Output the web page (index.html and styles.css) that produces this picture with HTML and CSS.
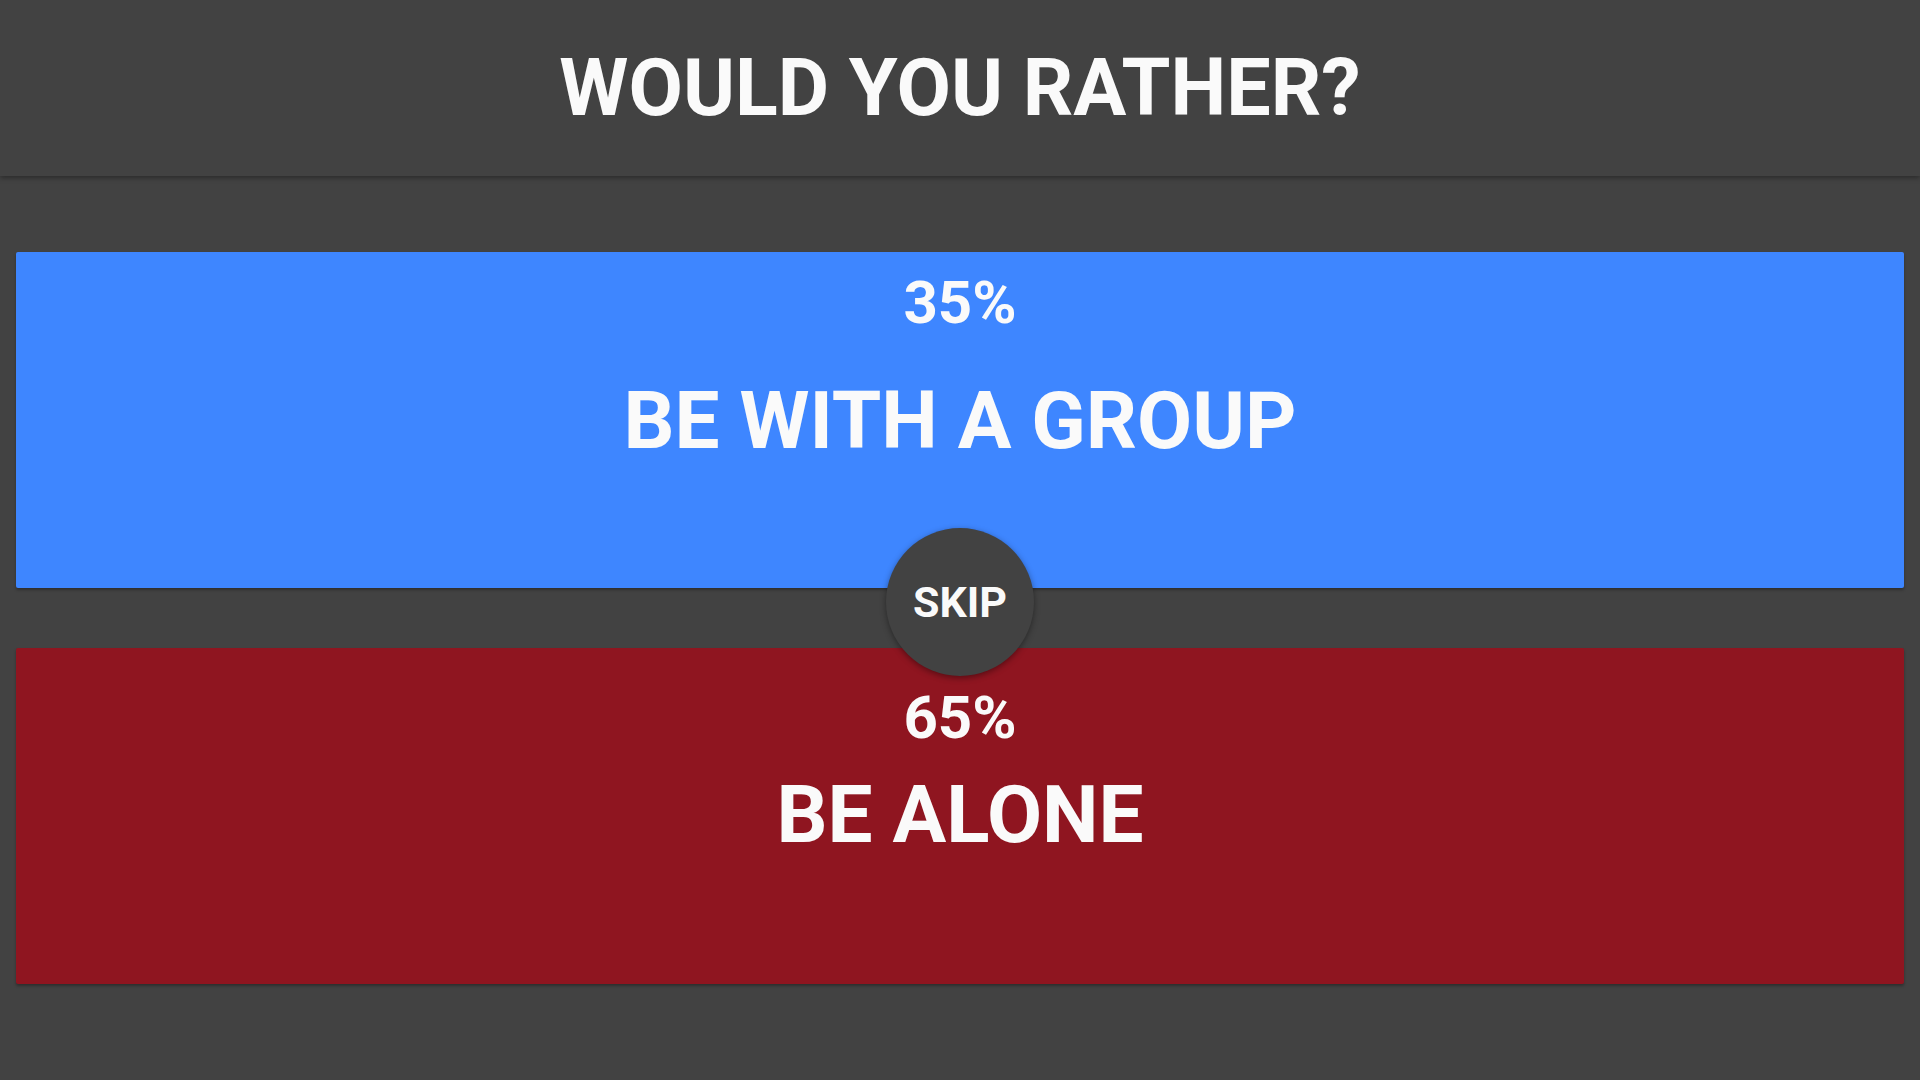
FILE: index.html
```html
<!DOCTYPE html>
<html lang="en">
  <head>
    <meta charset="UTF-8" />
    <meta name="viewport" content="width=device-width, initial-scale=1.0" />
    <title>Would You Rather?</title>
    <link rel="stylesheet" href="styles.css">
  </head>
  <body>
    <div class="app">
      <!-- Header -->
      <div class="header">
        <h1>WOULD YOU RATHER?</h1>
      </div>
      <!-- Choices -->
      <div class="choices">
        <div class="choice choice-blue">
          <div class="choice-percent">35%</div>
          <div class="choice-text">BE WITH A GROUP</div>
        </div>
        <div class="choice choice-red">
          <div class="choice-percent">65%</div>
          <div class="choice-text">BE ALONE</div>
        </div>
        <button class="skip-btn">SKIP</button>
      </div>
    </div>
  </body>
</html>
```

FILE: styles.css
```css
* {
  margin: 0;
  padding: 0;
  box-sizing: border-box;
}
body {
  font-family: Roboto, "Liberation Sans", sans-serif;
  background-color: #424242;
  color: #fafafa;
  min-height: 100vh;
}
.app {
  min-height: 100vh;
}
/* Header */
.header {
  height: 176px;
  background-color: #424242;
  box-shadow: 0 2px 5px rgba(0, 0, 0, 0.35);
  display: flex;
  align-items: center;
  justify-content: center;
  position: relative;
  z-index: 1;
}
.header h1 {
  font-size: 79px;
  font-weight: 700;
}
/* Choices */
.choices {
  position: relative;
  padding: 76px 16px 0;
  display: flex;
  flex-direction: column;
  gap: 60px;
}
.choice {
  height: 336px;
  border-radius: 2px;
  box-shadow: 0 2px 3px rgba(0, 0, 0, 0.3);
  display: flex;
  flex-direction: column;
  align-items: center;
  font-weight: 700;
}
.choice-blue {
  background-color: #3e86ff;
  padding-top: 16px;
}
.choice-red {
  background-color: #8f1520;
  padding-top: 35px;
}
.choice-percent {
  font-size: 60px;
  line-height: 70px;
}
.choice-text {
  font-size: 80px;
  line-height: 100px;
}
.choice-blue .choice-text {
  margin-top: 33px;
}
.choice-red .choice-text {
  margin-top: 12px;
}
.skip-btn {
  position: absolute;
  left: 50%;
  top: 352px;
  width: 148px;
  height: 148px;
  margin-left: -74px;
  border-radius: 50%;
  border: none;
  background-color: #424242;
  color: #fafafa;
  font-family: inherit;
  font-size: 43px;
  font-weight: 700;
  box-shadow: 0 2px 6px rgba(0, 0, 0, 0.4);
  cursor: pointer;
}
```
